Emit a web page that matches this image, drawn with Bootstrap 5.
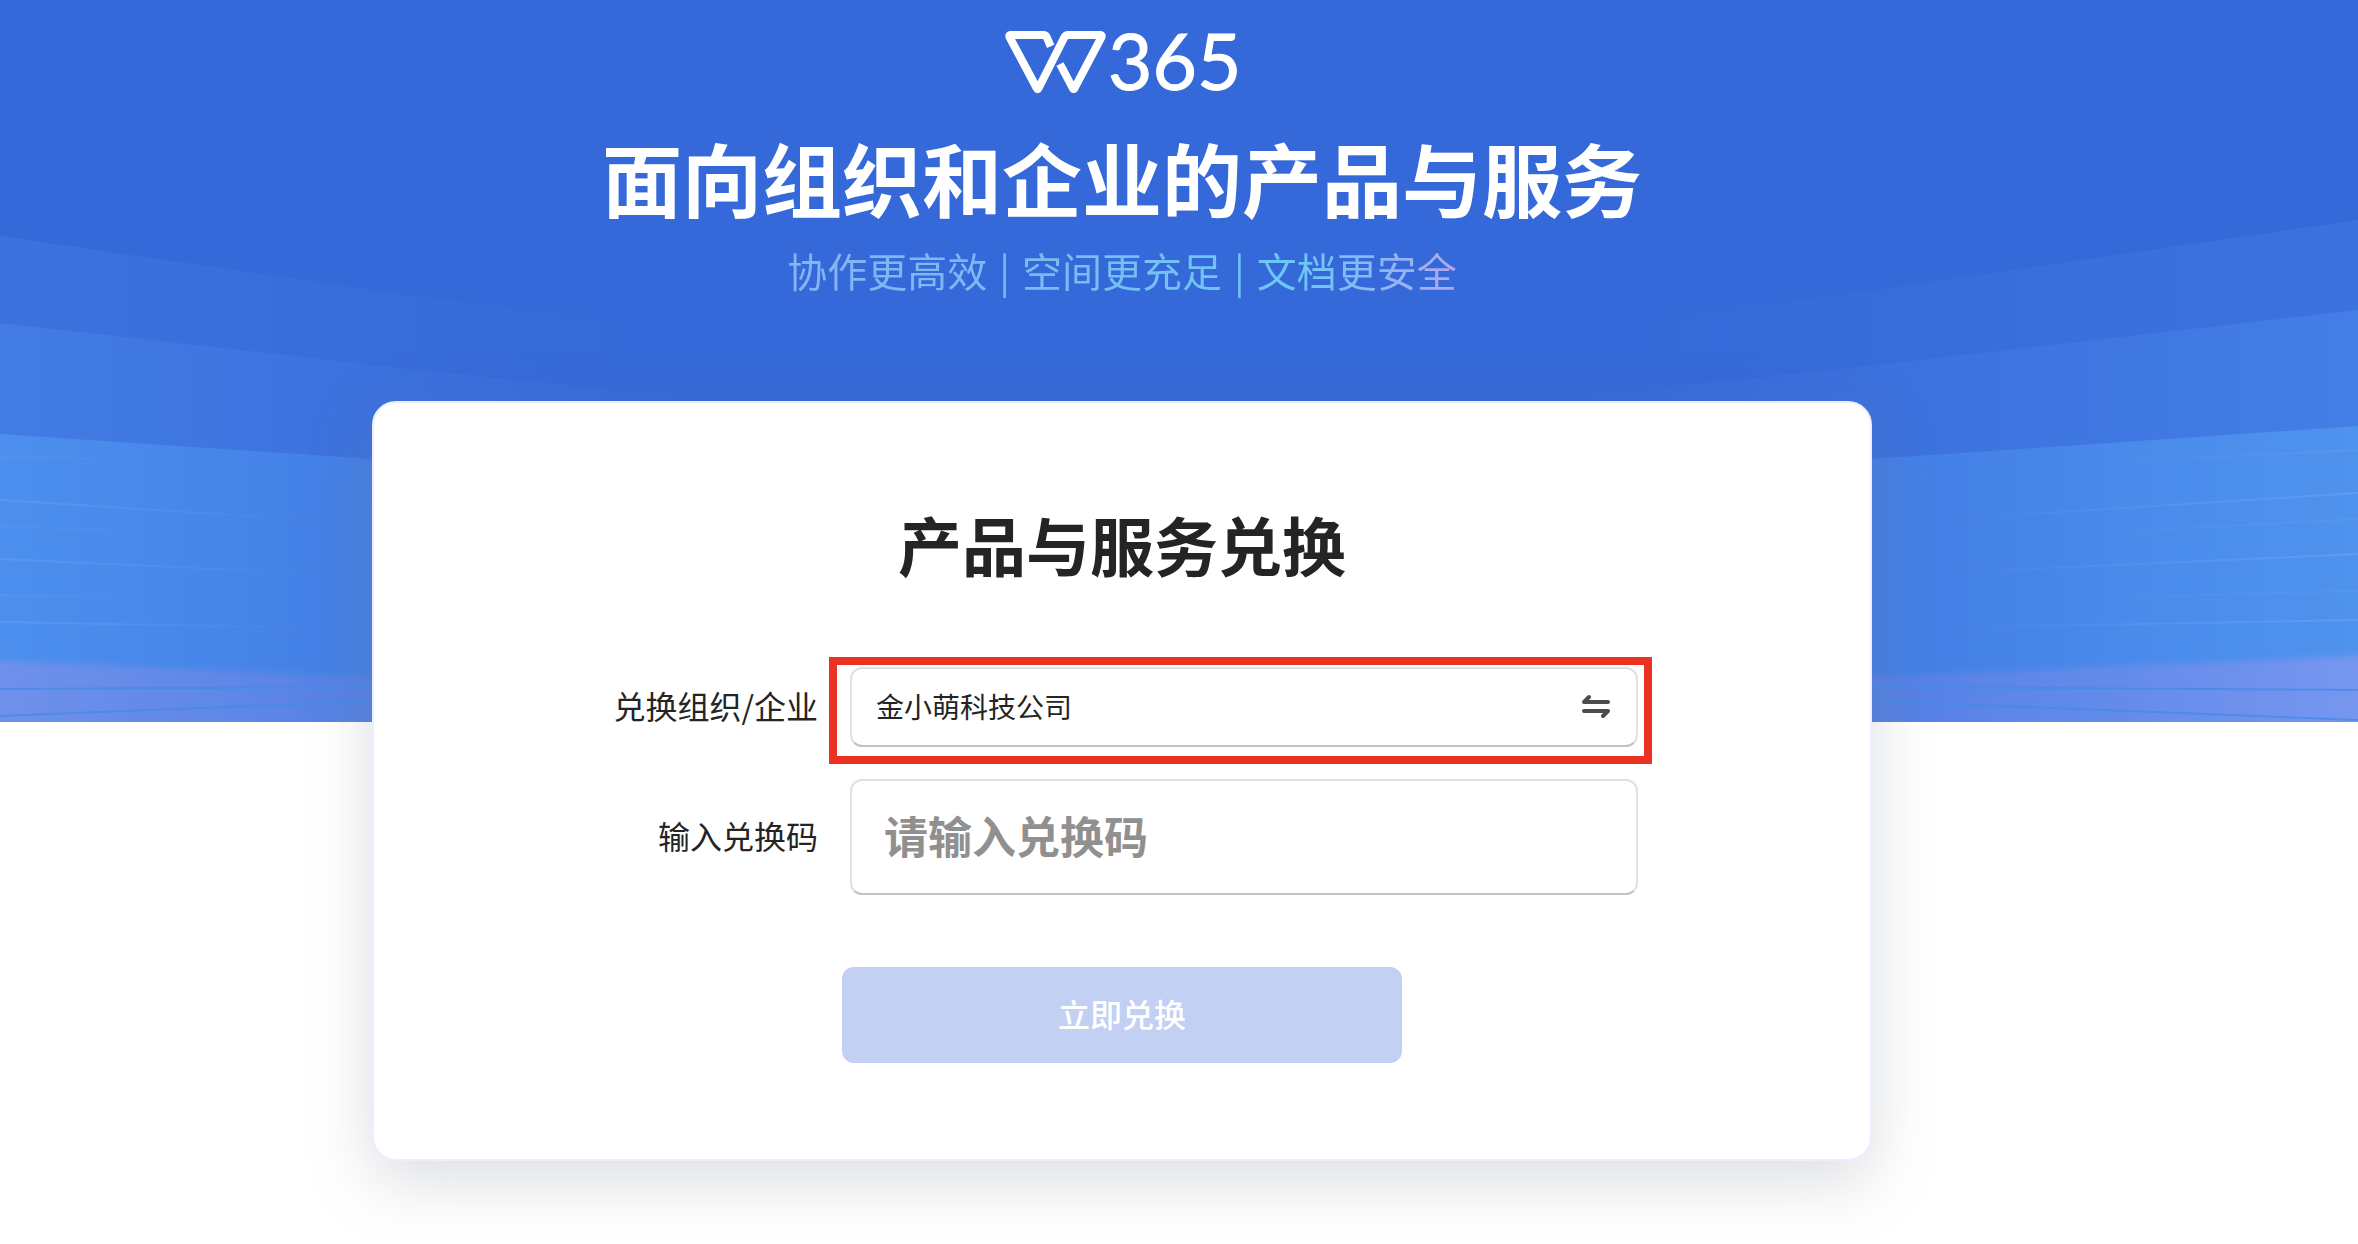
<!DOCTYPE html>
<html lang="zh-CN">
<head>
<meta charset="utf-8">
<meta name="viewport" content="width=device-width, initial-scale=1">
<title>W365 产品与服务兑换</title>
<link href="https://cdn.jsdelivr.net/npm/bootstrap@5.3.0/dist/css/bootstrap.min.css" rel="stylesheet">
<style>
  body { font-family: "Noto Sans CJK SC", "Noto Sans", sans-serif; color: #242424; background: #fff; }
  .hero-bg { height: 722px; z-index: 0; background: #3568d8; }
  .page-col { z-index: 1; padding: 0 114px 80px 0; }
  .brand-logo { height: 113px; width: 240px; }
  .hero-title { font-size: 80px; line-height: 96px; font-weight: 700; margin: 15px 0 18px; }
  .hero-sub { font-size: 40px; line-height: 56px; margin: 0 0 103px; color: transparent;
    background: linear-gradient(90deg, #86b3f3 0%, #78bdf2 40%, #6cc8f6 76%, #86baf4 86%, #b3a7ef 100%);
    -webkit-background-clip: text; background-clip: text; }
  .hero-sub span { margin: 0 3px; }
  .redeem-card { max-width: 1500px; border: 2px solid #ebeeff; border-radius: 24px; padding: 100px 232px 96px 96px;
    box-shadow: 0 20px 64px rgba(115, 122, 135, .26); }
  .redeem-title { font-size: 64px; line-height: 80px; font-weight: 700; margin: 0 -136px 84px 0; }
  .field-label { font-size: 32px; line-height: 48px; padding-bottom: 4px; }
  .form-line { gap: 32px; margin-bottom: 32px; }
  .field-box { flex: 0 1 788px; border: 2px solid #e0e0e0; border-bottom-color: #c2c2c2; border-radius: 12px; background: #fff; }
  .field-box .form-control { border: 0; background: transparent; box-shadow: none; color: #242424; }
  .org-box { height: 80px; padding: 0 16px 0 24px; }
  .org-box .form-control { font-size: 28px; padding: 0 0 2px; }
  .swap-btn { padding: 10px; border: 0; line-height: 0; }
  .code-box { height: 116px; padding: 0 32px; }
  .code-box .form-control { font-size: 44px; font-weight: 700; padding: 0 0 4px; }
  .code-box .form-control::placeholder { color: #909090; opacity: 1; }
  .callout-frame { position: absolute; inset: -12px -16px -19px -23px; border: 8px solid #ea3323; pointer-events: none; }
  .submit-wrap { margin: 72px -136px 0 0; }
  .submit-btn, .submit-btn:disabled { width: 560px; height: 96px; border: 0; border-radius: 12px; font-size: 32px;
    font-weight: 500; padding: 0 0 4px; background: #c2d0f3; color: #fff; opacity: 1; }
</style>
</head>
<body>
<div class="position-relative">
  <div class="hero-bg position-absolute top-0 start-0 w-100 overflow-hidden">
    <svg class="d-block w-100 h-100" viewBox="0 0 2358 722" preserveAspectRatio="none" aria-hidden="true">
      <defs>
        <linearGradient id="g1" gradientUnits="userSpaceOnUse" x1="0" x2="2358" y1="0" y2="0">
          <stop offset="0" stop-color="#3c71de"/><stop offset=".29" stop-color="#3568d8"/><stop offset=".68" stop-color="#3568d8"/><stop offset="1" stop-color="#3c72df"/>
        </linearGradient>
        <linearGradient id="g2" gradientUnits="userSpaceOnUse" x1="0" x2="2358" y1="0" y2="0">
          <stop offset="0" stop-color="#427ce4"/><stop offset=".16" stop-color="#3c71de"/><stop offset=".31" stop-color="#3568d8"/><stop offset=".66" stop-color="#3568d8"/><stop offset=".8" stop-color="#3c71de"/><stop offset="1" stop-color="#437ee6"/>
        </linearGradient>
        <linearGradient id="g3" gradientUnits="userSpaceOnUse" x1="0" x2="2358" y1="0" y2="0">
          <stop offset="0" stop-color="#4c8fee"/><stop offset=".08" stop-color="#4787ea"/><stop offset=".16" stop-color="#437ee5"/><stop offset=".3" stop-color="#3568d8"/><stop offset=".67" stop-color="#3568d8"/><stop offset=".8" stop-color="#437ee5"/><stop offset=".9" stop-color="#498aeb"/><stop offset="1" stop-color="#4f93ee"/>
        </linearGradient>
        <linearGradient id="g4" gradientUnits="userSpaceOnUse" x1="0" x2="2358" y1="0" y2="0">
          <stop offset="0" stop-color="#6f91eb"/><stop offset=".16" stop-color="#5481e4"/><stop offset=".3" stop-color="#3568d8"/><stop offset=".67" stop-color="#3568d8"/><stop offset=".8" stop-color="#5481e5"/><stop offset="1" stop-color="#7696ef"/>
        </linearGradient>
        <linearGradient id="gl" gradientUnits="userSpaceOnUse" x1="0" x2="2358" y1="0" y2="0">
          <stop offset="0" stop-color="#6ba6f2" stop-opacity=".4"/><stop offset=".14" stop-color="#6ba6f2" stop-opacity="0"/><stop offset=".82" stop-color="#6ba6f2" stop-opacity="0"/><stop offset="1" stop-color="#6fabf2" stop-opacity=".45"/>
        </linearGradient>
        <filter id="soft" x="-5%" y="-30%" width="110%" height="160%"><feGaussianBlur stdDeviation="0 3"/></filter>
      </defs>
      <path fill="url(#g1)" d="M0 236L400 294L760 340H1480L1840 295L2358 220V722H0Z"/>
      <path fill="url(#g2)" d="M0 323L400 368L760 406H1480L1840 369L2358 310V722H0Z"/>
      <path fill="url(#g3)" d="M0 434L372 459L800 488H1440L1872 459L2358 426V722H0Z"/>
      <path fill="url(#g4)" filter="url(#soft)" d="M-20 660L372 677L800 690H1440L1872 677L2378 655V760H-20Z"/>
      <g fill="none" stroke="url(#gl)" stroke-width="2">
        <path d="M0 500L372 524M0 559L372 576M0 622L372 629"/>
        <path d="M2358 493L1872 524M2358 554L1872 576M2358 620L1872 629"/>
        <path opacity=".4" d="M0 457L100 459M0 526L120 531M0 595L120 598M2358 450L2130 461M2358 519L2130 531M2358 591L2130 597"/>
      </g>
      <g fill="none" stroke="#4489ea" stroke-width="2" opacity=".75">
        <path d="M0 689L400 687M0 716L400 700"/>
        <path d="M2358 690L1850 687M2358 720L1850 700"/>
      </g>
    </svg>
  </div>

  <main class="page-col position-relative d-flex flex-column align-items-center">
    <svg class="brand-logo" viewBox="66 -31 720 339" role="img" aria-label="W365">
      <path d="M212 108L200 80Q197 74 190 74H92Q86 74 89 81L170 233Q173 240 176 233L252 83Q256 74 265 74H361Q367 74 364 81L284 233Q281 240 278 233L240 161" fill="none" stroke="#fff" stroke-width="24" stroke-linejoin="round"/>
      <text x="384" y="238" fill="#fff" stroke="#fff" stroke-width="3" font-family="Lato, sans-serif" font-weight="400" font-size="230">365</text>
    </svg>
    <h1 class="hero-title text-white text-center">面向组织和企业的产品与服务</h1>
    <p class="hero-sub text-center">协作更高效 <span>|</span> 空间更充足 <span>|</span> 文档更安全</p>

    <section class="redeem-card w-100 bg-white">
      <h2 class="redeem-title text-center">产品与服务兑换</h2>
      <form>
        <div class="form-line d-flex align-items-center">
          <label class="field-label flex-grow-1 text-end text-nowrap" for="org">兑换组织/企业</label>
          <div class="field-box org-box position-relative d-flex align-items-center">
            <input class="form-control" id="org" type="text" value="金小萌科技公司" readonly>
            <button class="btn swap-btn" type="button" aria-label="切换组织">
              <svg width="30" height="28" viewBox="0 0 30 28" fill="none" stroke="#4c4c4c" stroke-width="4" stroke-linecap="round" stroke-linejoin="round">
                <path d="M28 9H4L9 4M4 18H28L23 23"/>
              </svg>
            </button>
            <div class="callout-frame"></div>
          </div>
        </div>
        <div class="form-line d-flex align-items-center">
          <label class="field-label flex-grow-1 text-end text-nowrap" for="code">输入兑换码</label>
          <div class="field-box code-box d-flex align-items-center">
            <input class="form-control" id="code" type="text" placeholder="请输入兑换码">
          </div>
        </div>
        <div class="submit-wrap text-center">
          <button class="btn submit-btn" type="submit" disabled>立即兑换</button>
        </div>
      </form>
    </section>
  </main>
</div>
<script src="https://cdn.jsdelivr.net/npm/bootstrap@5.3.0/dist/js/bootstrap.bundle.min.js"></script>
</body>
</html>
